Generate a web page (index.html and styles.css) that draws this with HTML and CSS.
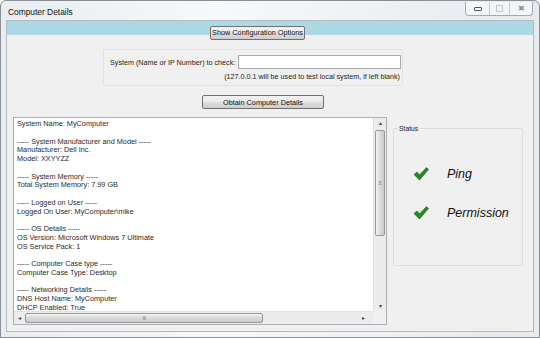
FILE: index.html
```html
<!DOCTYPE html>
<html lang="en">
<head>
    <meta charset="UTF-8">
    <title>Computer Details</title>
    <link rel="stylesheet" href="styles.css">
</head>
<body>
    <div class="window">
        <div class="titlebar">
            <span class="title">Computer Details</span>
            <div class="caption-buttons">
                <span class="cap min"><i></i></span>
                <span class="cap max"><i></i></span>
                <span class="cap close">&#x2716;</span>
            </div>
        </div>
        <div class="client">
            <div class="config-bar">
                <button class="btn config-btn">Show Configuration Options</button>
            </div>
            <div class="system-panel">
                <div class="system-row">
                    <label for="system">System (Name or IP Number) to check:</label>
                    <input type="text" id="system">
                </div>
                <div class="hint">(127.0.0.1 will be used to test local system, if left blank)</div>
            </div>
            <button class="btn obtain-btn">Obtain Computer Details</button>
            <div class="main-row">
                <div class="details">
                    <div class="details-text">
                        <p>System Name: MyComputer</p>
                        <p>&nbsp;</p>
                        <p>----- System Manufacturer and Model -----</p>
                        <p>Manufacturer: Dell Inc.</p>
                        <p>Model: XXYYZZ</p>
                        <p>&nbsp;</p>
                        <p>----- System Memory -----</p>
                        <p>Total System Memory: 7.99 GB</p>
                        <p>&nbsp;</p>
                        <p>----- Logged on User -----</p>
                        <p>Logged On User: MyComputer\mike</p>
                        <p>&nbsp;</p>
                        <p>----- OS Details -----</p>
                        <p>OS Version: Microsoft Windows 7 Ultimate</p>
                        <p>OS Service Pack: 1</p>
                        <p>&nbsp;</p>
                        <p>----- Computer Case type -----</p>
                        <p>Computer Case Type: Desktop</p>
                        <p>&nbsp;</p>
                        <p>----- Networking Details -----</p>
                        <p>DNS Host Name: MyComputer</p>
                        <p>DHCP Enabled: True</p>
                    </div>
                    <div class="vscroll">
                        <span class="arrow">&#9652;</span>
                        <div class="vthumb"><span class="grip">&#8801;</span></div>
                        <span class="arrow down">&#9662;</span>
                    </div>
                    <div class="hscroll">
                        <span class="arrow">&#9666;</span>
                        <div class="hthumb"><span class="grip">III</span></div>
                        <span class="arrow right">&#9656;</span>
                    </div>
                    <div class="corner"></div>
                </div>
                <fieldset class="status">
                    <legend>Status</legend>
                    <div class="status-item">
                        <svg class="check" width="16" height="16" viewBox="0 0 16 16">
                            <path d="M1 8.5 L4 6 L6.5 9 L13.5 1.5 L15.5 3.5 L6.5 14 Z" fill="#1e8c1e" stroke="#0f5f0f" stroke-width="0.6"/>
                        </svg>
                        <span>Ping</span>
                    </div>
                    <div class="status-item">
                        <svg class="check" width="16" height="16" viewBox="0 0 16 16">
                            <path d="M1 8.5 L4 6 L6.5 9 L13.5 1.5 L15.5 3.5 L6.5 14 Z" fill="#1e8c1e" stroke="#0f5f0f" stroke-width="0.6"/>
                        </svg>
                        <span>Permission</span>
                    </div>
                </fieldset>
            </div>
        </div>
    </div>
</body>
</html>
```

FILE: styles.css
```css
/* Basic reset */
* {
    margin: 0;
    padding: 0;
    box-sizing: border-box;
}

body {
    font-family: 'Liberation Sans', Arial, sans-serif;
    color: #222;
    background-color: #fff;
    width: 540px;
    height: 338px;
    overflow: hidden;
}

/* Window frame */
.window {
    width: 540px;
    height: 338px;
    border: 1px solid #8a8f96;
    border-radius: 6px 6px 0 0;
    background: linear-gradient(to right, #e9edf1, #f7f8fa 40%, #e6eaee);
    padding: 0 5px 5px 5px;
    display: flex;
    flex-direction: column;
}

.titlebar {
    height: 19px;
    display: flex;
    align-items: flex-start;
    justify-content: space-between;
}

.title {
    font-size: 8.4px;
    padding: 6px 0 0 2px;
    color: #111;
}

.caption-buttons {
    display: flex;
    margin-top: 1px;
    margin-right: 1px;
    border: 1px solid #a5abb3;
    border-top: none;
    border-radius: 0 0 4px 4px;
    background: #f4f5f7;
    height: 14px;
}

.cap {
    display: flex;
    align-items: center;
    justify-content: center;
    height: 13px;
    border-left: 1px solid #c5cad0;
}

.cap.min {
    width: 23px;
    border-left: none;
}

.cap.min i {
    width: 8px;
    height: 4px;
    border: 1px solid #4c5560;
    border-radius: 1px;
}

.cap.max {
    width: 20px;
}

.cap.max i {
    width: 7px;
    height: 7px;
    border: 1px solid #c3c8cd;
}

.cap.close {
    width: 23px;
    font-size: 8px;
    color: #8b9096;
}

/* Client area */
.client {
    flex: 1;
    background-color: #f0f0f0;
    border: 1px solid #b4b9be;
    display: flex;
    flex-direction: column;
}

.config-bar {
    background-color: #add8e6;
    height: 14px;
    padding-left: 203px;
}

.btn {
    font-family: 'Liberation Sans', Arial, sans-serif;
    font-size: 7.3px;
    color: #111;
    white-space: nowrap;
    border: 1px solid #707070;
    border-radius: 2px;
    background: linear-gradient(#f2f2f2, #ebebeb 50%, #dddddd 51%, #cfcfcf);
}

.config-btn {
    width: 95px;
    height: 14px;
}

.system-panel {
    margin: 14px 0 0 96px;
    width: 300px;
    height: 37px;
    border: 1px solid #e2e2e2;
    border-radius: 2px;
    padding: 5px 0 0 6px;
}

.system-row {
    display: flex;
    align-items: center;
    gap: 3px;
}

.system-row label {
    font-size: 7.2px;
    color: #222;
    white-space: nowrap;
}

.system-row input {
    width: 163px;
    height: 14px;
    border: 1px solid #abadb3;
    background: #fff;
}

.hint {
    font-size: 7.2px;
    color: #222;
    white-space: nowrap;
    text-align: right;
    padding-right: 2px;
    margin-top: 3px;
}

.obtain-btn {
    margin: 9px 0 0 195px;
    width: 122px;
    height: 14px;
}

.main-row {
    display: flex;
    align-items: flex-start;
    margin-top: 8px;
    padding-left: 6px;
}

/* Details text box with scrollbars */
.details {
    width: 374px;
    height: 208px;
    border: 1px solid #abadb3;
    background: #fff;
    display: grid;
    grid-template-columns: 1fr 13px;
    grid-template-rows: 1fr 13px;
}

.details-text {
    padding: 2px 0 0 3px;
    font-size: 7.3px;
    line-height: 8.75px;
    color: #2a2a2a;
    overflow: hidden;
    white-space: nowrap;
}

.vscroll {
    background: #ececec;
    border-left: 1px solid #e0e0e0;
    display: flex;
    flex-direction: column;
    align-items: center;
}

.arrow {
    font-size: 6px;
    color: #444;
    line-height: 10px;
    height: 10px;
}

.vscroll .arrow.down {
    margin-top: auto;
}

.vthumb {
    width: 10px;
    height: 106px;
    margin-top: 2px;
    border: 1px solid #9a9a9a;
    border-radius: 2px;
    background: linear-gradient(to right, #f2f2f2, #dadada 50%, #cbcbcb);
    display: flex;
    align-items: center;
    justify-content: center;
}

.grip {
    font-size: 6px;
    color: #777;
    line-height: 6px;
}

.hscroll {
    background: #ececec;
    border-top: 1px solid #e0e0e0;
    display: flex;
    align-items: center;
    padding: 0 4px;
}

.hthumb {
    width: 238px;
    height: 10px;
    margin-left: 4px;
    border: 1px solid #9a9a9a;
    border-radius: 2px;
    background: linear-gradient(#f2f2f2, #dadada 50%, #cbcbcb);
    display: flex;
    align-items: center;
    justify-content: center;
}

.hthumb .grip {
    font-size: 5px;
    letter-spacing: -0.5px;
}

.hscroll .arrow.right {
    margin-left: auto;
    margin-right: 4px;
}

.corner {
    background: #f0f0f0;
}

/* Status group */
.status {
    margin: 8px 0 0 6px;
    width: 130px;
    height: 141px;
    border: 1px solid #dcdcdc;
    border-radius: 2px;
    padding: 34px 0 0 0;
}

.status legend {
    font-size: 6.8px;
    padding: 0 1px;
    margin-left: 4px;
    color: #222;
}

.status-item {
    display: flex;
    align-items: center;
    gap: 18px;
    height: 16px;
    margin: 0 0 23px 19px;
}

.status-item span {
    font-family: 'Liberation Sans', Arial, sans-serif;
    font-style: italic;
    font-size: 12.5px;
    color: #111;
}
```
